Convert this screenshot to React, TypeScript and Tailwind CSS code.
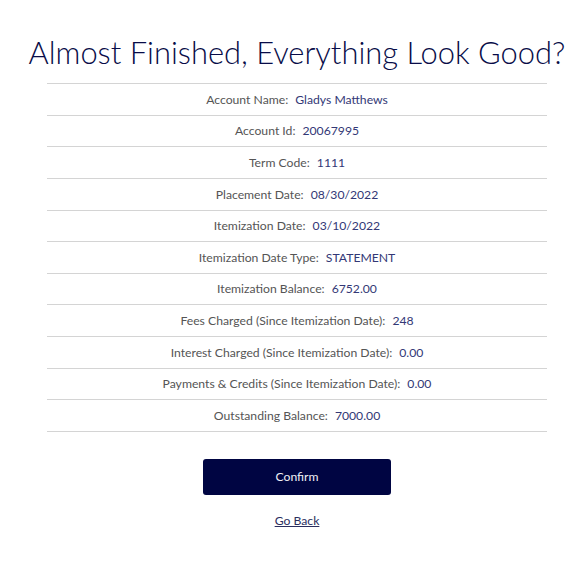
import React from "react";

const rows: [string, string][] = [
  ["Account Name:", "Gladys Matthews"],
  ["Account Id:", "20067995"],
  ["Term Code:", "1111"],
  ["Placement Date:", "08/30/2022"],
  ["Itemization Date:", "03/10/2022"],
  ["Itemization Date Type:", "STATEMENT"],
  ["Itemization Balance:", "6752.00"],
  ["Fees Charged (Since Itemization Date):", "248"],
  ["Interest Charged (Since Itemization Date):", "0.00"],
  ["Payments & Credits (Since Itemization Date):", "0.00"],
  ["Outstanding Balance:", "7000.00"],
];

export default function App() {
  return (
    <div className="min-h-[573px] bg-white pl-[10px] font-['Lato',sans-serif]">
      <div className="flex flex-col items-center pt-[33px]">
        <h1 className="whitespace-nowrap font-['Lato_Light','Lato',sans-serif] text-[30.9px] leading-[40px] font-light text-[#080c48]">
          Almost Finished, Everything Look Good?
        </h1>
        <div className="mt-[10px] w-[500px] border-b border-[#d4d4d4]">
          {rows.map(([label, value]) => (
            <div
              key={label}
              className="flex h-[31.64px] items-center justify-center gap-[7px] border-t border-[#d4d4d4] pt-px text-[12.2px] font-normal"
            >
              <span className="text-[#555555]">{label}</span>
              <span className="text-[#333876]">{value}</span>
            </div>
          ))}
        </div>
        <button className="mt-[27px] h-[36px] w-[188px] rounded-[3px] bg-[#000542] text-[12.2px] font-normal text-[#f0f0f5]">
          Confirm
        </button>
        <a href="#" className="mt-[17px] text-[12.2px] font-normal text-[#2a2e5e] underline">
          Go Back
        </a>
      </div>
    </div>
  );
}
